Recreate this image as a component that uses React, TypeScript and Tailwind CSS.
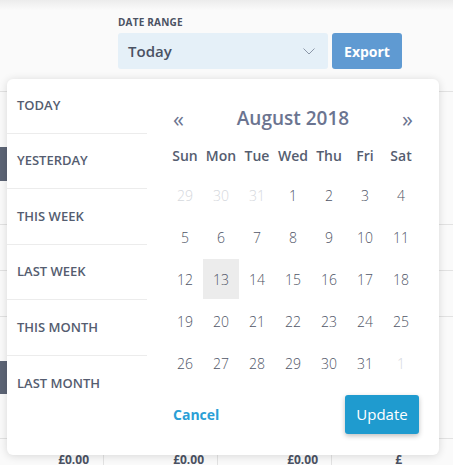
import React from "react";

const presets = ["Today", "Yesterday", "This week", "Last week", "This month", "Last month"];
const presetHeights = ["h-[55px]", "h-[55px]", "h-[56px]", "h-[55px]", "h-[56px]", "h-[55px]"];
const weekdays = ["Sun", "Mon", "Tue", "Wed", "Thu", "Fri", "Sat"];

type Day = { n: number; muted?: boolean; active?: boolean };

function buildDays(): Day[] {
  const days: Day[] = [{ n: 29, muted: true }, { n: 30, muted: true }, { n: 31, muted: true }];
  for (let i = 1; i <= 31; i++) days.push({ n: i, active: i === 13 });
  days.push({ n: 1, muted: true });
  return days;
}

function Chevron() {
  return (
    <svg width="12" height="7" viewBox="0 0 12 7" fill="none" stroke="#8c97a8" strokeWidth="1">
      <path d="M0.5 0.5L6 6L11.5 0.5" />
    </svg>
  );
}

export default function App() {
  const days = buildDays();

  return (
    <div
      className="relative w-[453px] h-[465px] overflow-hidden bg-[#fafafa] text-[#4b5263]"
      style={{ fontFamily: '"Open Sans", "Liberation Sans", sans-serif' }}
    >
      <div className="h-[10px] bg-gradient-to-b from-[#ececec] to-[#fafafa]" />

      {/* toolbar */}
      <div className="h-[81px] pl-[118px] pt-[5px]">
        <div className="text-[10px] font-bold leading-[14px] tracking-[0.2px]">DATE RANGE</div>
        <div className="mt-[4px] flex gap-[4px]">
          <div className="flex h-[36px] w-[210px] items-center justify-between rounded-[3px] bg-[#e5f0f8] pl-[10px] pr-[13px]">
            <span className="text-[15px] font-semibold">Today</span>
            <Chevron />
          </div>
          <button className="h-[36px] w-[70px] rounded-[3px] bg-[#5f9ad2] text-[14px] font-bold text-white">
            Export
          </button>
        </div>
      </div>

      {/* table behind */}
      <div className="border-t border-[#e2e2e2]">
        <div className="h-[55px]" />
        <div className="h-[34px] w-[7px] bg-[#5c6475]" />
        <div className="h-[43px]" />
        <div className="h-[46px] border-t border-[#e2e2e2]" />
        <div className="h-[46px] border-t border-[#e2e2e2]" />
        <div className="h-[45px] border-t border-[#e2e2e2]" />
        <div className="h-[33px] w-[7px] bg-[#5c6475]" />
        <div className="h-[44px]" />
        <div className="flex border-t border-[#e2e2e2] text-[12px] font-bold">
          <div className="w-[104px] border-r border-[#e2e2e2] pr-[14px] pt-[12px] text-right">£0.00</div>
          <div className="w-[114px] border-r border-[#e2e2e2] pr-[13px] pt-[12px] text-right">£0.00</div>
          <div className="w-[114px] border-r border-[#e2e2e2] pr-[13px] pt-[12px] text-right">£0.00</div>
          <div className="w-[114px] pr-[44px] pt-[12px] text-right">£</div>
        </div>
      </div>

      {/* date range popover */}
      <div className="absolute left-[7px] top-[79px] flex h-[376px] w-[432px] rounded-[6px] bg-white shadow-[0_1px_8px_rgba(0,0,0,0.14)]">
        <ul className="w-[140px]">
          {presets.map((p, i) => (
            <li
              key={p}
              className={
                "flex items-center pl-[10px] text-[13px] font-semibold uppercase text-[#555d70] " +
                presetHeights[i] +
                (i < presets.length - 1 ? " border-b border-[#ececec]" : "")
              }
            >
              {p}
            </li>
          ))}
        </ul>

        <div className="flex-1 pl-[20px] pr-[20px] pt-[25px]">
          <div className="flex h-[28px] items-center justify-between px-[6px] text-[#6b7490]">
            <span className="text-[22px] leading-none">«</span>
            <span className="text-[19px] font-semibold">August 2018</span>
            <span className="text-[22px] leading-none">»</span>
          </div>

          <div className="mt-[13px] grid grid-cols-7">
            {weekdays.map((w) => (
              <div key={w} className="flex h-[20px] items-center justify-center text-[14px] font-semibold text-[#555d70]">
                {w}
              </div>
            ))}
          </div>

          <div className="mt-[10px] grid grid-cols-7 gap-y-[2px]">
            {days.map((d, i) => (
              <div
                key={i}
                className={
                  "flex h-[40px] items-center justify-center text-[14px] font-light " +
                  (d.muted ? "text-[#d5d8dd] " : "text-[#4f5566] ") +
                  (d.active ? "bg-[#ececec]" : "")
                }
              >
                {d.n}
              </div>
            ))}
          </div>

          <div className="mt-[12px] flex items-center justify-between">
            <button className="px-[6px] text-[14px] font-bold text-[#2a9fd6]">Cancel</button>
            <button className="h-[39px] w-[74px] rounded-[3px] bg-[#1f9bcf] text-[15px] text-white shadow-[0_2px_5px_rgba(0,0,0,0.25)]">
              Update
            </button>
          </div>
        </div>
      </div>
    </div>
  );
}
